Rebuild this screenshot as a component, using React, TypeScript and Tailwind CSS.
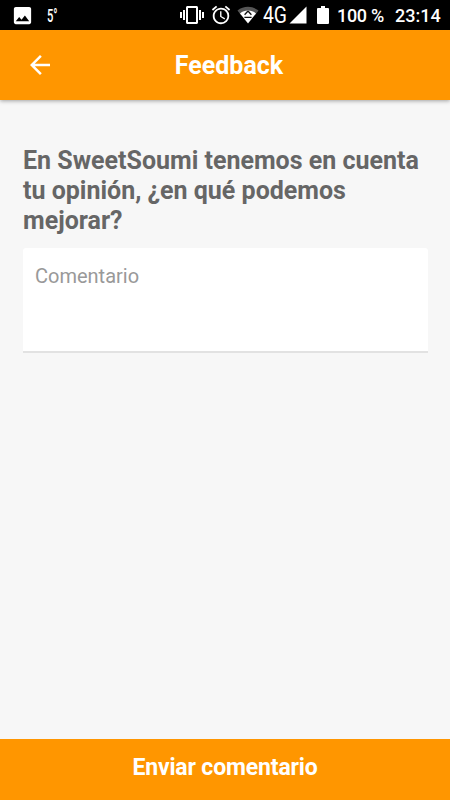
import { useState } from 'react';
import { MdAlarm, MdArrowBack, MdImage, MdVibration } from 'react-icons/md';

function WifiIcon() {
  return (
    <svg className="ml-[5px] shrink-0" width="22" height="18" viewBox="0 0 22 18">
      <path d="M0.5 4.6C6.5 -0.4 15.5 -0.4 21.5 4.6L18.5 8.5H3.5Z" fill="#555" />
      <path d="M3 7.6C5.5 5 8 4.4 11 4.4S16.5 5 19 7.6L11 17.6Z" fill="#fff" />
      <path d="M11 5L7.6 8.8M11 5L14.4 8.8M7.4 11.4H14.6" stroke="#111" strokeWidth="1.3" fill="none" />
    </svg>
  );
}

function SignalIcon() {
  return (
    <svg className="ml-[2px] shrink-0" width="18" height="18" viewBox="0 0 18 18">
      <path d="M17.5 0.5V17.5H0.5Z" fill="#fff" />
    </svg>
  );
}

function BatteryIcon() {
  return (
    <svg className="ml-[10px] shrink-0" width="12" height="18" viewBox="0 0 12 18">
      <path d="M4 0h4v2h3q1 0 1 1v14q0 1-1 1H1q-1 0-1-1V3q0-1 1-1h3Z" fill="#fff" />
    </svg>
  );
}

function StatusBar() {
  return (
    <div className="flex h-[30px] shrink-0 items-center bg-black text-white whitespace-nowrap">
      <MdImage size={23} className="ml-[11px] shrink-0" />
      <div className="mt-[1px] ml-[13px] w-[13px] text-[18px] leading-[29px] font-medium">
        <div className="origin-left scale-x-[0.62]">5°</div>
      </div>
      <MdVibration size={24} className="ml-[120px] shrink-0" />
      <MdAlarm size={22} className="ml-[6px] shrink-0" />
      <WifiIcon />
      <div className="mt-[2px] ml-[4px] w-[24px] text-[23px] leading-[28px]">
        <div className="origin-left scale-x-[0.84]">4G</div>
      </div>
      <SignalIcon />
      <BatteryIcon />
      <div className="mt-[2px] ml-[8px] w-[47px] text-[18px] leading-[28px] font-medium tracking-[-0.3px]">100 %</div>
      <div className="mt-[2px] ml-[11px] text-[18px] leading-[28px] font-medium">23:14</div>
    </div>
  );
}

export default function App() {
  const [comment, setComment] = useState('');

  return (
    <div className="flex h-[800px] w-[450px] flex-col overflow-hidden bg-[#f7f7f7] font-['Roboto',sans-serif]">
      <StatusBar />
      <header className="grid h-[70px] shrink-0 grid-cols-[84px_1fr_76px] items-center bg-[#ff9600] text-white shadow-[0_1px_4px_rgba(0,0,0,0.35)]">
        <button className="ml-[25px] w-[30px]" aria-label="Volver">
          <MdArrowBack size={30} />
        </button>
        <h1 className="pt-[2px] text-center text-[25px] leading-[30px] font-bold">Feedback</h1>
      </header>

      <main className="flex-1 pt-[46px] pr-[22px] pl-[23px]">
        <h2 className="text-[25px] leading-[30px] font-bold text-[#666]">
          En SweetSoumi tenemos en cuenta tu opinión, ¿en qué podemos mejorar?
        </h2>
        <textarea
          value={comment}
          onChange={e => setComment(e.target.value)}
          placeholder="Comentario"
          className="mt-[12px] block h-[105px] w-full resize-none rounded-t-[3px] border-b-2 border-[#e2e2e2] bg-white px-[12px] pt-[16px] text-[20px] leading-[24px] text-[#666] outline-none placeholder:text-[#999]"
        />
      </main>

      <button className="h-[61px] shrink-0 bg-[#ff9600] pb-[3px] text-[23px] font-bold tracking-[-0.15px] text-white">
        Enviar comentario
      </button>
    </div>
  );
}
